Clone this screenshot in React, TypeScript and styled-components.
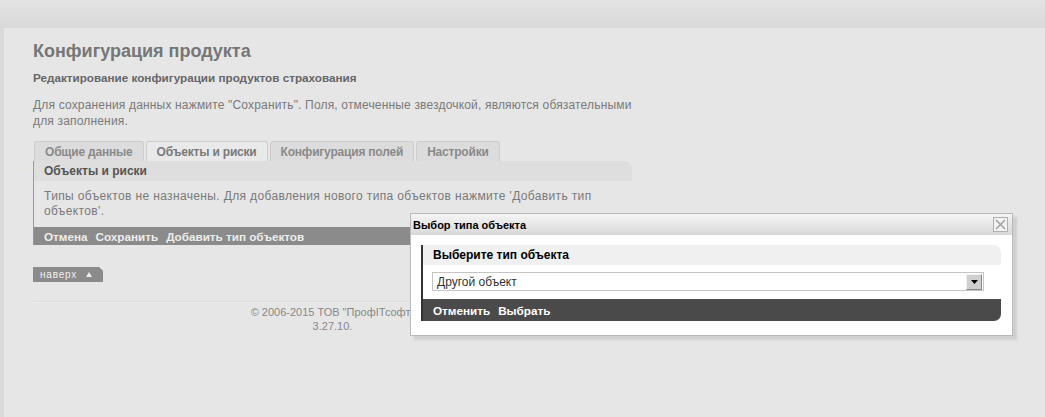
import React from "react";
import styled, { createGlobalStyle } from "styled-components";

const GlobalStyle = createGlobalStyle`
	html, body {
		margin: 0;
		padding: 0;
		background: #e6e6e6;
		font-family: "Liberation Sans", Arial, sans-serif;
	}
`;

const TopBar = styled.div`
	height: 28px;
	background: linear-gradient(#e3e3e3, #d9d9d9);
`;

const Page = styled.div`
	display: flex;
	min-height: 389px;
`;

const SideStrip = styled.div`
	width: 4px;
	background: #dadada;
`;

const Main = styled.div`
	flex: 1;
	padding: 12px 0 0 29px;
	position: relative;
`;

const Content = styled.div`
	width: 599px;
`;

const Title = styled.h1`
	margin: 0;
	font-size: 18px;
	line-height: 22px;
	font-weight: bold;
	color: #767676;
`;

const Subtitle = styled.h2`
	margin: 9px 0 0;
	font-size: 11.7px;
	line-height: 14px;
	font-weight: bold;
	color: #666;
`;

const Hint = styled.p`
	margin: 12px 0 0;
	font-size: 12px;
	line-height: 16px;
	letter-spacing: 0.17px;
	color: #7a7a7a;
`;

const Tabs = styled.div`
	display: flex;
	gap: 2px;
	margin-top: 12px;
	padding-left: 1px;
`;

const Tab = styled.div<{ $active?: boolean }>`
	height: 19px;
	padding: 0 10px;
	display: flex;
	align-items: center;
	font-size: 12px;
	letter-spacing: -0.2px;
	font-weight: bold;
	color: ${p => (p.$active ? "#7a7a7a" : "#8a8a8a")};
	background: ${p => (p.$active ? "#e9e9e9" : "#dcdcdc")};
	border: 1px solid #cdcdcd;
	border-bottom: none;
	border-radius: 3px 3px 0 0;
`;

const Panel = styled.div`
	border-left: 1px solid #9a9a9a;
`;

const PanelHeader = styled.div<{ $dark?: boolean }>`
	height: 20px;
	display: flex;
	align-items: center;
	padding-left: 10px;
	font-size: 12px;
	font-weight: bold;
	color: ${p => (p.$dark ? "#000" : "#555")};
	background: ${p => (p.$dark ? "#f0f0f0" : "#dedede")};
	border-top-right-radius: 8px;
`;

const PanelBody = styled.div`
	padding: 8px 10px 8px;
	font-size: 12px;
	line-height: 15px;
	letter-spacing: 0.36px;
	color: #7a7a7a;
`;

const ActionBar = styled.div<{ $dark?: boolean }>`
	height: ${p => (p.$dark ? "22px" : "18px")};
	display: flex;
	align-items: center;
	gap: 8px;
	padding-left: 10px;
	background: ${p => (p.$dark ? "#4a4a4a" : "#8b8b8b")};
	border-bottom-right-radius: ${p => (p.$dark ? "7px" : "0")};
`;

const ActionLink = styled.a<{ $dark?: boolean }>`
	font-size: 11.7px;
	font-weight: bold;
	color: ${p => (p.$dark ? "#fff" : "#ededed")};
	text-decoration: none;
	cursor: pointer;
`;

const TopLink = styled.a`
	display: inline-flex;
	align-items: center;
	gap: 9px;
	margin-top: 22px;
	height: 15px;
	padding: 0 11px 0 7px;
	background: #8b8b8b;
	color: #f0f0f0;
	font-size: 10px;
	letter-spacing: 0.8px;
	clip-path: polygon(0 0, calc(100% - 4px) 0, 100% 4px, 100% 100%, 0 100%);
`;

const Separator = styled.hr`
	margin: 19px 0 0;
	border: none;
	border-top: 1px solid #dddddd;
	border-bottom: 1px solid #ececec;
`;

const Footer = styled.div`
	margin-top: 2px;
	text-align: center;
	font-size: 11px;
	line-height: 14px;
	color: #888;
`;

const Dialog = styled.div`
	position: absolute;
	left: 406px;
	top: 185px;
	width: 601px;
	height: 121px;
	background: #fff;
	border: 1px solid #b9b9b9;
	box-shadow: 4px 4px 2px #cfcfcf;
	display: flex;
	flex-direction: column;
`;

const DialogTitle = styled.div`
	height: 21px;
	display: flex;
	align-items: center;
	justify-content: space-between;
	padding: 0 4px 0 2px;
	background: linear-gradient(#f5f5f5, #d8d8d8);
	font-size: 11px;
	font-weight: bold;
	color: #000;
`;

const CloseButton = styled.div`
	width: 13px;
	height: 13px;
	border: 1px solid #b0b0b0;
	background: #f2f2f2;
	display: flex;
	align-items: center;
	justify-content: center;
`;

const DialogBody = styled.div`
	padding: 10px 11px 0 10px;
`;

const DialogPanel = styled.div`
	border-left: 2px solid #333;
`;

const SelectRow = styled.div`
	padding: 7px 17px 8px 9px;
`;

const Select = styled.div`
	height: 17px;
	border: 1px solid #c4c4c4;
	background: #fff;
	display: flex;
	align-items: center;
	justify-content: space-between;
	padding: 0 1px 0 4px;
	font-size: 12px;
	color: #333;
`;

const SelectArrow = styled.div`
	width: 14px;
	height: 14px;
	background: #cfcfcf;
	border: 1px solid #8a8a8a;
	border-top-color: #eee;
	border-left-color: #eee;
	display: flex;
	align-items: center;
	justify-content: center;
`;

export default function App() {
	return (
		<>
			<GlobalStyle />
			<TopBar />
			<Page>
				<SideStrip />
				<Main>
					<Content>
						<Title>Конфигурация продукта</Title>
						<Subtitle>Редактирование конфигурации продуктов страхования</Subtitle>
						<Hint>
							Для сохранения данных нажмите "Сохранить". Поля, отмеченные звездочкой, являются
							обязательными для заполнения.
						</Hint>
						<Tabs>
							<Tab>Общие данные</Tab>
							<Tab $active>Объекты и риски</Tab>
							<Tab>Конфигурация полей</Tab>
							<Tab>Настройки</Tab>
						</Tabs>
						<Panel>
							<PanelHeader>Объекты и риски</PanelHeader>
							<PanelBody>
								Типы объектов не назначены. Для добавления нового типа объектов нажмите 'Добавить
								тип объектов'.
							</PanelBody>
							<ActionBar>
								<ActionLink>Отмена</ActionLink>
								<ActionLink>Сохранить</ActionLink>
								<ActionLink>Добавить тип объектов</ActionLink>
							</ActionBar>
						</Panel>
						<TopLink>
							наверх
							<svg width="6" height="5" viewBox="0 0 6 5">
								<path d="M3 0 L6 5 L0 5 Z" fill="#f0f0f0" />
							</svg>
						</TopLink>
						<Separator />
						<Footer>
							© 2006-2015 ТОВ "ПрофІТсофт"
							<br />
							3.27.10.
						</Footer>
					</Content>

					<Dialog>
						<DialogTitle>
							Выбор типа объекта
							<CloseButton>
								<svg width="11" height="11" viewBox="0 0 11 11">
									<path d="M1 1 L10 10 M10 1 L1 10" stroke="#9a9a9a" strokeWidth="1.3" />
								</svg>
							</CloseButton>
						</DialogTitle>
						<DialogBody>
							<DialogPanel>
								<PanelHeader $dark>Выберите тип объекта</PanelHeader>
								<SelectRow>
									<Select>
										Другой объект
										<SelectArrow>
											<svg width="7" height="4" viewBox="0 0 7 4">
												<path d="M0 0 L7 0 L3.5 4 Z" fill="#000" />
											</svg>
										</SelectArrow>
									</Select>
								</SelectRow>
								<ActionBar $dark>
									<ActionLink $dark>Отменить</ActionLink>
									<ActionLink $dark>Выбрать</ActionLink>
								</ActionBar>
							</DialogPanel>
						</DialogBody>
					</Dialog>
				</Main>
			</Page>
		</>
	);
}
